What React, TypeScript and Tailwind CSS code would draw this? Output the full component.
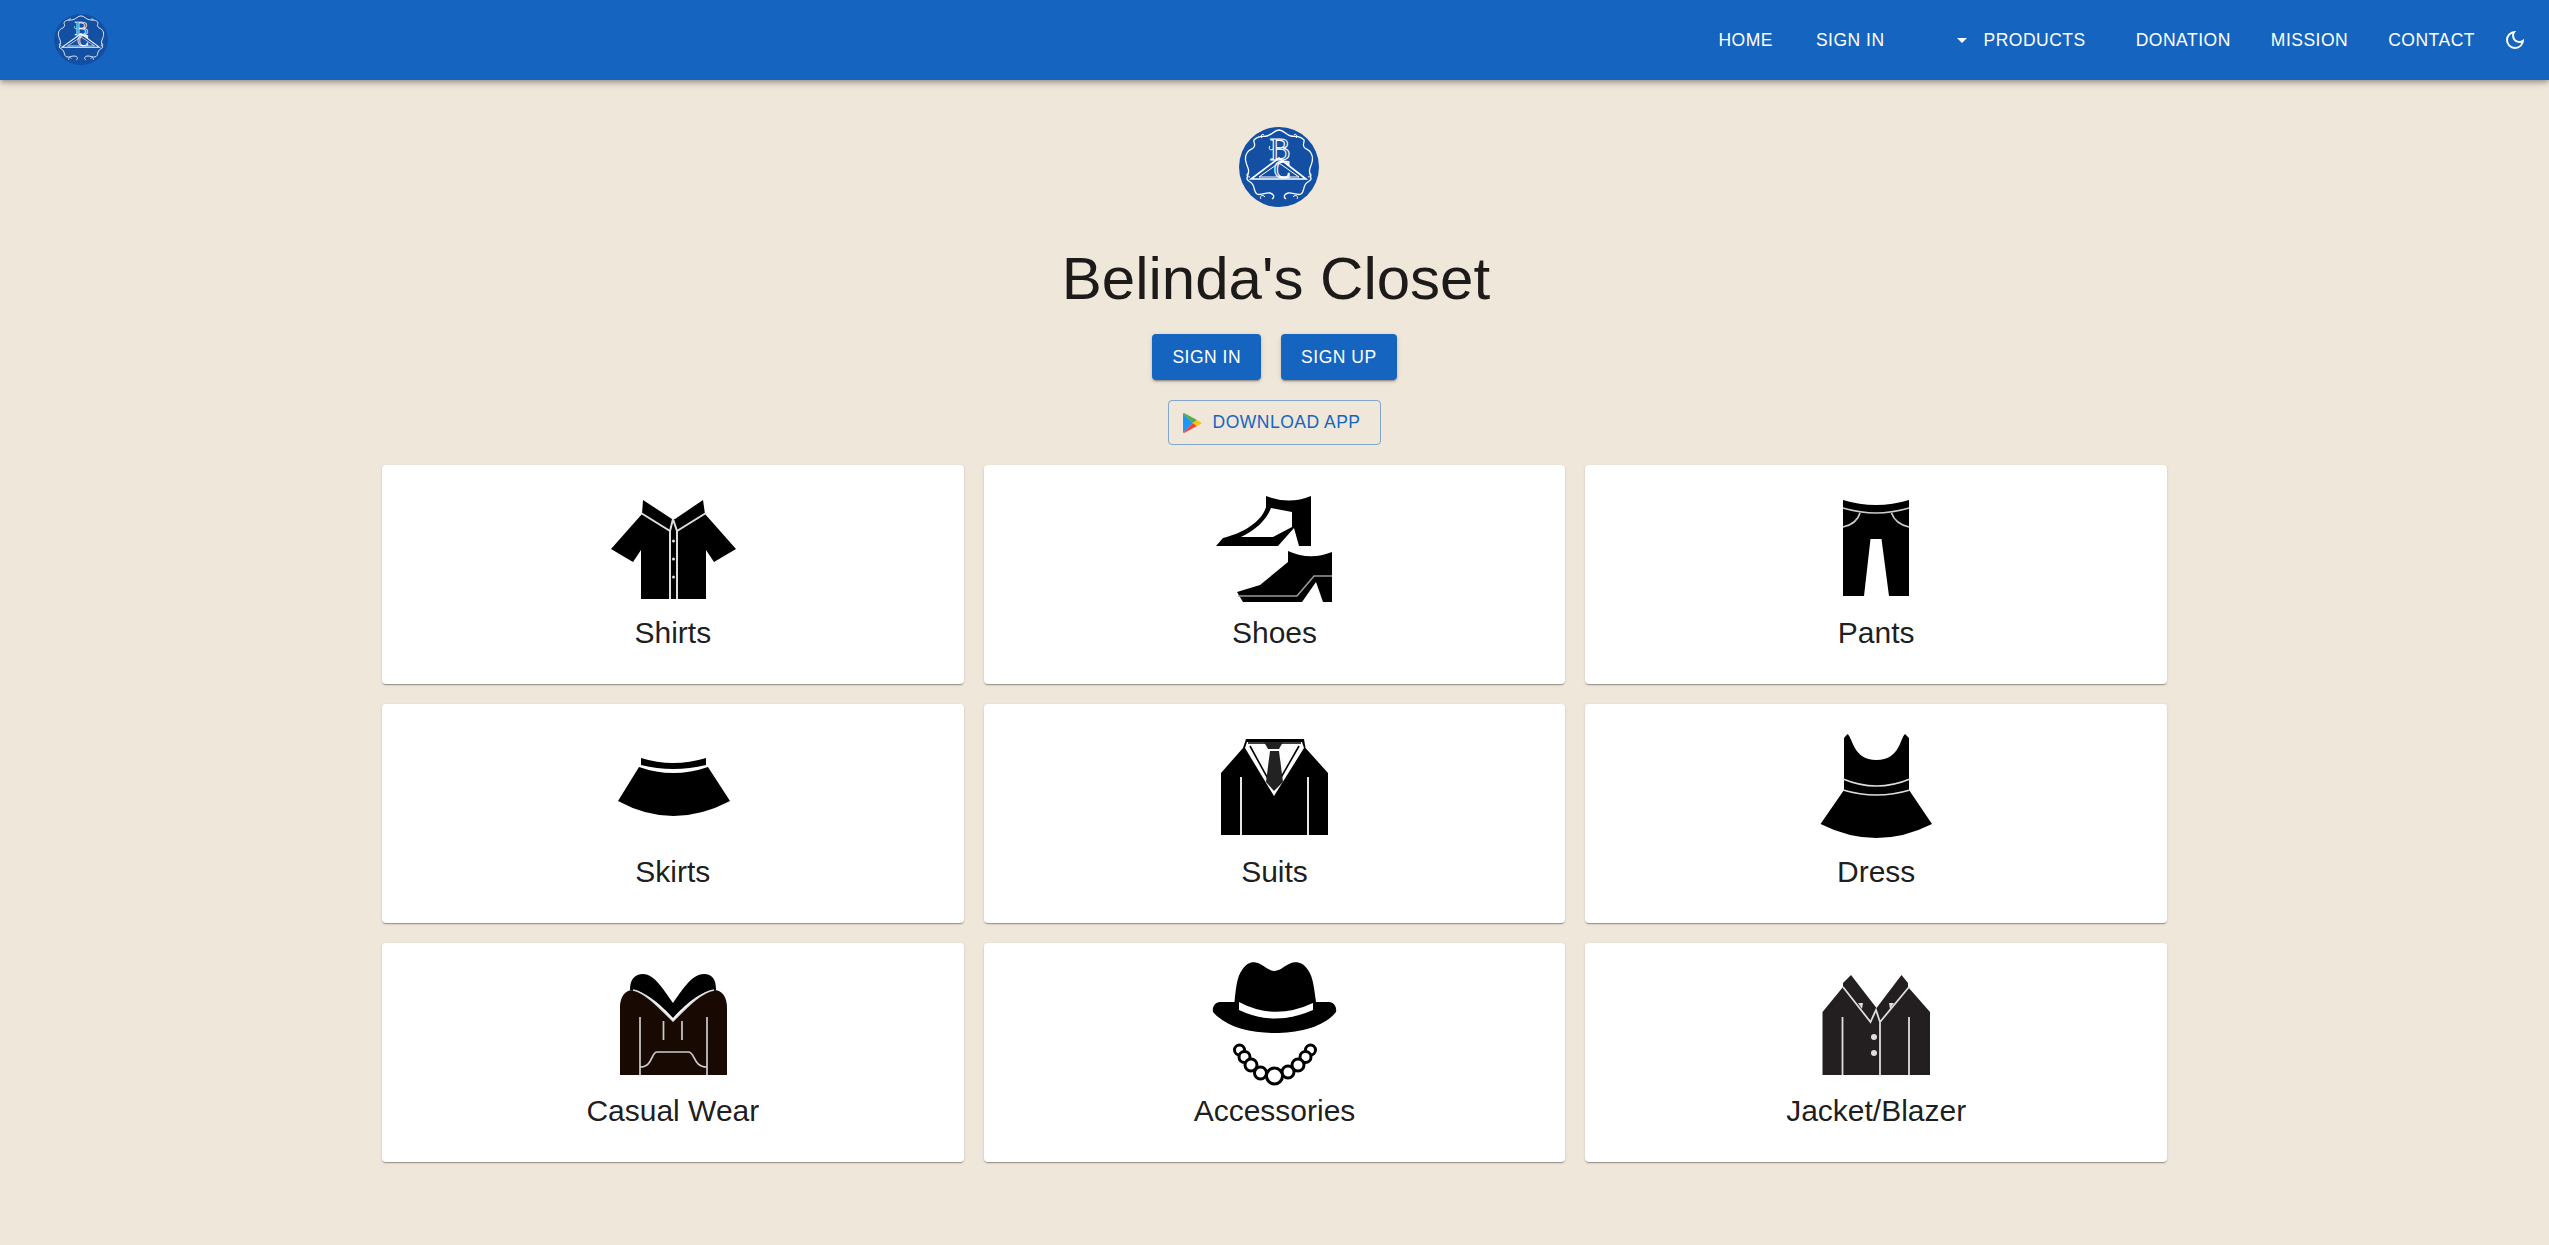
import type { ReactNode } from "react";
import { MdOutlineDarkMode } from "react-icons/md";

function Logo({ className }: { className: string }) {
  const half =
    "M40 3C35 3 33 8 28 9C24 10 19 8 15 13C14 15 17 17 15 20C13 23 10 22 8 26C5 31 7 36 9 41C11 46 8 48 8 52C9 55 12 54 14 58C16 62 15 65 18 67C22 69 27 65 31 66C35 67 36 70 33 72";
  return (
    <svg viewBox="0 0 80 80" preserveAspectRatio="none" className={className}>
      <circle cx="40" cy="40" r="40" fill="#134fa3" />
      <g fill="none" stroke="#fff" strokeWidth="1.3">
        <path d={half} />
        <path d={half} transform="matrix(-1 0 0 1 80 0)" />
        <path d="M40 31L12 52H67Z" strokeWidth="1.6" />
        <path d="M40 36L20 50H60Z" strokeWidth="1" />
        <path d="M23 11C21 9 23 6 25 8M57 11C59 9 57 6 55 8M11 50C7 50 7 46 10 46M69 50C73 50 73 46 70 46M22 72C20 69 24 67 26 70M58 72C60 69 56 67 54 70" strokeWidth="1" />
        <path d="M34 22C31 24 29 22 31 19" strokeWidth="1" />
      </g>
      <text x="41" y="33" textAnchor="middle" fontSize="31" fontFamily="'Liberation Serif', serif" fill="none" stroke="#fff" strokeWidth="1.1">B</text>
      <text x="43" y="51" textAnchor="middle" fontSize="25" fontFamily="'Liberation Serif', serif" fill="none" stroke="#fff" strokeWidth="1.1">C</text>
    </svg>
  );
}

function PlayIcon() {
  return (
    <svg viewBox="0 0 19 20" className="w-[19px] h-[20px]">
      <path d="M0 .5L10 10 0 19.5Z" fill="#2196f3" />
      <path d="M0 .5L1 0 14 7 10 10Z" fill="#4caf50" />
      <path d="M0 19.5L10 10 14 13 1 20Z" fill="#f44336" />
      <path d="M14 7L19 10 14 13 10 10Z" fill="#ffc107" />
    </svg>
  );
}

const Shirt = (
  <>
    <path d="M70 21L99 40H102L130 21 132 35 163 70 141 83 133 71V120H68V71L60 83 38 70 69 35Z" fill="#000" />
    <path d="M68 34L97 52V120M133 34L104 52V120M100 40L97 52M100 40L104 52" fill="none" stroke="#ddd" strokeWidth="2" />
    <circle cx="100.5" cy="62" r="1.5" fill="#ddd" />
    <circle cx="100.5" cy="80" r="1.5" fill="#ddd" />
    <circle cx="100.5" cy="98" r="1.5" fill="#ddd" />
  </>
);

const Shoes = (
  <>
    <path d="M92 17Q115 26 137 17V67H125L120 49 104 67H42L49 59C70 54 88 42 92 28Z" fill="#000" />
    <path d="M67 58C80 52 92 42 97 29L118 33V48L99 58Z" fill="#fff" />
    <path d="M114 72Q136 82 158 73V123H149L142 103 128 123H69L63 113 86 106 114 83Z" fill="#000" />
    <path d="M64 117H123L140 97H158" fill="none" stroke="#999" strokeWidth="1.6" />
  </>
);

const Pants = (
  <>
    <path d="M67 21Q100 31 133 21V117H113L105.500 60H94.500L88 117H67Z" fill="#000" />
    <path d="M67 29Q100 39 133 29M84 34C82 41 76 46 67 48M115.500 34C118 41 124 46 133 48" fill="none" stroke="#ccc" strokeWidth="1.7" />
  </>
);

const Skirt = (
  <>
    <path d="M68 40Q100 50 133 40V47Q100 55 68 47Z" fill="#000" />
    <path d="M66 49Q100 61 135 49L157 83Q100 113 45 83Z" fill="#000" />
  </>
);

const Suit = (
  <>
    <path d="M69 30L47 55V117H154V55L131.500 30 130 21H72Z" fill="#000" />
    <path d="M73 24H128L130 30 100 78 71 30Z" fill="#fff" />
    <path d="M74 25H127M76 28L99 70M125 28L101 70" fill="none" stroke="#000" strokeWidth="1.6" />
    <path d="M90 24H109L105 31H94Z" fill="#222" />
    <path d="M96 33H105L109 64 100 73 92 64Z" fill="#222" />
    <path d="M67 59V117M134 59V117" fill="none" stroke="#fff" strokeWidth="1.8" />
  </>
);

const Dress = (
  <>
    <path d="M71.500 16L68 20V72L44.500 106Q100.500 134 156 106L133 72V20L129 16C124 20 124 42 100.500 42C77 42 77 20 71.500 16Z" fill="#000" />
    <path d="M67 61Q100.500 75 134 61M67 72Q100.500 82 134 72" fill="none" stroke="#ddd" strokeWidth="1.7" />
  </>
);

const Casual = (
  <>
    <path d="M57 33C57 22 62 17 70 17C82 17 92 35 100 46C108 35 118 17 131 17C139 17 143 22 143 33C128 33 112 48 100 61C88 48 72 33 57 33Z" fill="#000" />
    <path d="M47 118V50C47 40 52 33 60 33C72 35 86 50 100 64C114 50 128 35 141 33C149 33 154 40 154 50V118Z" fill="#180a02" />
    <path d="M60 33C72 35 86 50 100 64C114 50 128 35 141 33" fill="none" stroke="#ddd" strokeWidth="1.6" />
    <path d="M67 60V118M134 60V118M90.500 64V83M109 64V83M67 110C80 110 78 95 84 95H115.500C122 95 120 110 134 110" fill="none" stroke="#ccc" strokeWidth="1.7" />
  </>
);

const pearls: [number, number, number][] = [
  [65.5, 93, 5],
  [136.5, 93, 5],
  [70.5, 100, 5.5],
  [131.5, 100, 5.5],
  [77, 108, 6],
  [124, 108, 6],
  [86.5, 116, 6],
  [114, 115, 6],
  [100.5, 119, 8],
];

const Accessories = (
  <>
    <path d="M60.500 45C62 30 63 20 68 13C72 7 76 5 80.500 5.300C88 6 94 14 100.500 14C107 14 113 6 120.500 5.300C126 5 130 7 134 13C139 20 140 30 142 45H155C160 45 163 50 162 55C150 70 125 76 100.500 76C76 76 52 70 39 55C38 50 41 45 46 45Z" fill="#000" />
    <path d="M65 45V53Q100.500 70 139 53V46Q100.500 64 65 45Z" fill="#fff" />
    {pearls.map(([cx, cy, r]) => (
      <circle key={cx} cx={cx} cy={cy} r={r} fill="#fff" stroke="#000" strokeWidth="3" />
    ))}
  </>
);

const Jacket = (
  <>
    <path d="M46.500 55L67 30V26L75 18 100.500 51 125.500 18 132 26V30L154 55V118H46.500Z" fill="#231f20" />
    <path d="M67 30L94.500 65 100 53 104 65 133 30M104 65V118M66.500 60V118M133 60V118" fill="none" stroke="#ddd" strokeWidth="1.8" />
    <circle cx="98" cy="80" r="3" fill="#ddd" />
    <circle cx="98" cy="96" r="3" fill="#ddd" />
    <path d="M82 46L86 52 87 46ZM118 46L114 52 113 46Z" fill="#ddd" />
  </>
);

const categories: { label: string; icon: ReactNode }[] = [
  { label: "Shirts", icon: Shirt },
  { label: "Shoes", icon: Shoes },
  { label: "Pants", icon: Pants },
  { label: "Skirts", icon: Skirt },
  { label: "Suits", icon: Suit },
  { label: "Dress", icon: Dress },
  { label: "Casual Wear", icon: Casual },
  { label: "Accessories", icon: Accessories },
  { label: "Jacket/Blazer", icon: Jacket },
];

function Card({ label, icon }: { label: string; icon: ReactNode }) {
  return (
    <div className="h-[219px] pt-[14px] flex flex-col items-center bg-white rounded-[4px] shadow-[0_2px_1px_-1px_rgba(0,0,0,0.2),0_1px_1px_0_rgba(0,0,0,0.14),0_1px_3px_0_rgba(0,0,0,0.12)]">
      <svg viewBox="0 0 200 130" className="w-[200px] h-[130px]">
        {icon}
      </svg>
      <div className="mt-[6px] text-[30px] leading-[36px] text-black/90">{label}</div>
    </div>
  );
}

export default function App() {
  const btn =
    "h-[46px] px-5 flex items-center rounded-[4px] bg-[#1565c0] text-white text-[17.5px] tracking-[0.5px] shadow-[0_3px_1px_-2px_rgba(0,0,0,0.2),0_2px_2px_0_rgba(0,0,0,0.14),0_1px_5px_0_rgba(0,0,0,0.12)]";

  return (
    <div className="min-h-screen bg-[#efe7da] font-['Liberation_Sans',Arial,sans-serif]">
      <header className="relative h-20 flex items-center pl-[54px] pr-[22px] bg-[#1565c0] text-white text-[17.5px] tracking-[0.5px] shadow-[0_2px_4px_-1px_rgba(0,0,0,0.2),0_4px_5px_0_rgba(0,0,0,0.14),0_1px_10px_0_rgba(0,0,0,0.12)]">
        <Logo className="w-[54px] h-[51px] -mt-[2px]" />
        <nav className="ml-auto flex items-center">
          <a>HOME</a>
          <a className="ml-[43px]">SIGN IN</a>
          <span className="ml-[72px] w-0 h-0 border-x-[5px] border-x-transparent border-t-[5px] border-t-white" />
          <a className="ml-[17px]">PRODUCTS</a>
          <a className="ml-[50px]">DONATION</a>
          <a className="ml-[40px]">MISSION</a>
          <a className="ml-[40px]">CONTACT</a>
          <MdOutlineDarkMode className="ml-[28px] w-6 h-6" />
        </nav>
      </header>

      <main className="flex flex-col items-center">
        <Logo className="mt-[47px] ml-2 w-20 h-20" />
        <h1 className="mt-[37px] ml-[3px] text-[60px] leading-[70px] font-normal text-[#1d1b19]">Belinda's Closet</h1>
        <div className="mt-5 flex gap-5">
          <button className={btn}>SIGN IN</button>
          <button className={btn}>SIGN UP</button>
        </div>
        <button className="mt-5 h-[45px] pl-[14px] pr-5 flex items-center gap-[11px] rounded-[4px] border border-[#1565c0]/50 text-[#1565c0] text-[17.5px] tracking-[0.5px]">
          <PlayIcon />
          DOWNLOAD APP
        </button>
        <div className="mt-5 mb-[83px] w-[1785px] grid grid-cols-3 gap-5">
          {categories.map((c) => (
            <Card key={c.label} label={c.label} icon={c.icon} />
          ))}
        </div>
      </main>
    </div>
  );
}
